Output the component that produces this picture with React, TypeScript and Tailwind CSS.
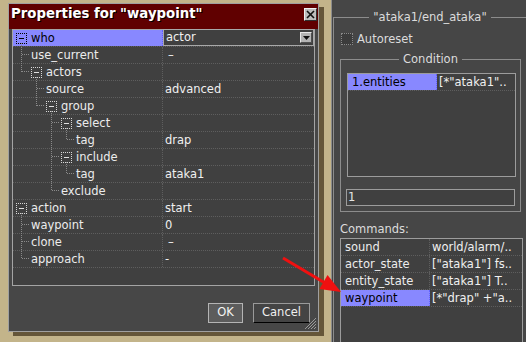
import React from 'react';

type TreeNode = {
  label: string;
  depth: number;
  box?: boolean;
  value?: string;
  dash?: boolean;
};

const tree: TreeNode[] = [
  { label: 'who', depth: 0, box: true, value: 'actor' },
  { label: 'use_current', depth: 1, value: '–', dash: true },
  { label: 'actors', depth: 1, box: true },
  { label: 'source', depth: 2, value: 'advanced' },
  { label: 'group', depth: 2, box: true },
  { label: 'select', depth: 3, box: true },
  { label: 'tag', depth: 4, value: 'drap' },
  { label: 'include', depth: 3, box: true },
  { label: 'tag', depth: 4, value: 'ataka1' },
  { label: 'exclude', depth: 3 },
  { label: 'action', depth: 0, box: true, value: 'start' },
  { label: 'waypoint', depth: 1, value: '0' },
  { label: 'clone', depth: 1, value: '–', dash: true },
  { label: 'approach', depth: 1, value: '-' },
];

const indent = ['pl-[3px]', 'pl-[18px]', 'pl-[33px]', 'pl-[48px]', 'pl-[63px]'];

const ROW = 17;

// dotted connector lines of the tree, worked out from the rows
const TreeLines = () => {
  const lines: React.ReactNode[] = [];
  tree.forEach((node, i) => {
    if (!node.box) return;
    const kids: number[] = [];
    for (let j = i + 1; j < tree.length && tree[j].depth > node.depth; j++) {
      if (tree[j].depth === node.depth + 1) kids.push(j);
    }
    if (!kids.length) return;
    const x = 3 + 15 * node.depth + 5.5;
    const last = kids[kids.length - 1];
    lines.push(
      <line key={`v${i}`} x1={x} y1={ROW * i + 13} x2={x} y2={ROW * last + 8} />,
    );
    kids.forEach((c) => {
      const y = ROW * c + 7.5;
      lines.push(
        <line key={`h${c}`} x1={x} y1={y} x2={3 + 15 * (node.depth + 1) - 1} y2={y} />,
      );
    });
  });
  return (
    <svg
      className="pointer-events-none absolute left-0 top-0"
      width={150}
      height={ROW * tree.length}
      stroke="#8a8a8a"
      strokeDasharray="1 1"
      shapeRendering="crispEdges"
    >
      {lines}
    </svg>
  );
};

const MinusBox = ({ dark }: { dark?: boolean }) => (
  <span
    className={`mr-[4px] flex h-[11px] w-[11px] shrink-0 items-center justify-center border border-dotted ${
      dark ? 'border-black' : 'border-[#d8d8d8]'
    }`}
  >
    <span className={`h-[1px] w-[5px] ${dark ? 'bg-black' : 'bg-[#e0e0e0]'}`} />
  </span>
);

const DropButton = () => (
  <span className="mr-[1px] flex h-[11px] w-[12px] items-center justify-center border border-t-[#e8e8e8] border-l-[#e8e8e8] border-b-[#505050] border-r-[#505050] bg-[#b4b4b4]">
    <svg width="7" height="4" viewBox="0 0 7 4">
      <polygon points="0,0 7,0 3.5,4" fill="#111" />
    </svg>
  </span>
);

const PropertyTree = () => (
  <div className="relative h-[257px] w-[303px] border border-[#a4a4a4] bg-[#404040]">
    <TreeLines />
    {tree.map((node, i) => {
      const selected = i === 0;
      return (
        <div key={i} className="flex h-[17px] border-b border-dotted border-[#5e5e5e] leading-[15px]">
          <div
            className={`flex w-[150px] items-center border-r border-dotted ${indent[node.depth]} ${
              selected ? 'border-[#6060ff] bg-[#8888ff] text-black' : 'border-[#5e5e5e] text-[#ececec]'
            }`}
          >
            {node.box && <MinusBox dark={selected} />}
            <span>{node.label}</span>
          </div>
          {selected ? (
            <div className="-mt-[1px] flex h-[17px] flex-1 items-center justify-between border border-[#a8a8a8] pl-[2px] text-[#f0f0f0]">
              <span>{node.value}</span>
              <DropButton />
            </div>
          ) : (
            <div className={`flex flex-1 items-center text-[#f0f0f0] ${node.dash ? 'pl-[5px]' : 'pl-[2px]'}`}>
              {node.value}
            </div>
          )}
        </div>
      );
    })}
  </div>
);

const ListRow = ({
  label,
  value,
  selected,
}: {
  label: string;
  value: string;
  selected?: boolean;
}) => (
  <div className="flex h-[17px] border-b border-dotted border-[#5e5e5e] leading-[15px]">
    <div
      className={`flex w-[89px] items-center border-r border-dotted pl-[4px] ${
        selected ? 'border-[#6060ff] bg-[#8888ff] text-black' : 'border-[#5e5e5e] text-[#ececec]'
      }`}
    >
      {label}
    </div>
    <div className="flex flex-1 items-center overflow-hidden whitespace-nowrap pl-[2px] text-[#f0f0f0]">
      {value}
    </div>
  </div>
);

const Dialog = () => (
  <div className="relative ml-[8px] mt-[3px] flex h-[329px] w-[311px] shrink-0 flex-col border border-[#a0a0a0] bg-[#474747] shadow-[5px_4px_0_rgba(70,55,30,0.75)]">
    <div className="flex h-[25px] items-start justify-between bg-[#600000] pl-[2px] pr-[1px]">
      <span className="pt-[2px] font-['DejaVu_Sans'] text-[13.3px] font-bold leading-[16px] text-white [text-shadow:1px_1px_0_#000]">
        Properties for "waypoint"
      </span>
      <span className="mt-[4px] flex h-[13px] w-[13px] items-center justify-center border border-t-[#f0f0f0] border-l-[#f0f0f0] border-b-[#303030] border-r-[#303030] bg-[#bdbdbd]">
        <svg width="9" height="9" viewBox="0 0 9 9" stroke="#111" strokeWidth="1.6">
          <line x1="1" y1="1" x2="8" y2="8" />
          <line x1="8" y1="1" x2="1" y2="8" />
        </svg>
      </span>
    </div>
    <div className="px-[3px]">
      <PropertyTree />
    </div>
    <div className="mt-[17px] flex justify-end gap-[10px] pr-[8px]">
      <button className="flex h-[20px] w-[35px] items-center justify-center border border-[#b4b4b4] bg-[#5c5c5c] text-[#f4f4f4]">
        OK
      </button>
      <button className="flex h-[20px] w-[57px] items-center justify-center border border-[#9a9a9a] border-b-black border-b-dotted bg-[#444444] text-[#f0f0f0]">
        Cancel
      </button>
    </div>
    <svg className="absolute bottom-[1px] right-[1px]" width="13" height="13" stroke="#9a9a9a" shapeRendering="crispEdges">
      <line x1="12" y1="1" x2="1" y2="12" />
      <line x1="12" y1="4" x2="4" y2="12" />
      <line x1="12" y1="7" x2="7" y2="12" />
      <line x1="12" y1="10" x2="10" y2="12" />
    </svg>
  </div>
);

const SidePanel = () => (
  <div className="ml-[12px] h-[342px] w-[195px] shrink-0 border-l border-[#8c8c8c] bg-[#464646] text-[#dcdcdc]">
    <fieldset className="ml-[1px] mt-[10px] h-[340px] w-[194px] border border-[#8c8c8c]">
      <legend className="mx-auto px-[4px] leading-[14px]">"ataka1/end_ataka"</legend>
      <div className="ml-[7px] mt-[8px] flex items-center gap-[4px]">
        <span className="h-[12px] w-[12px] border border-dotted border-[#8a8a8a] bg-[#3c3c3c]" />
        <span className="leading-[14px]">Autoreset</span>
      </div>
      <fieldset className="ml-[6px] mt-[6px] w-[181px] border border-[#8c8c8c] pb-[5px]">
        <legend className="mx-auto px-[4px] leading-[14px]">Condition</legend>
        <div className="ml-[6px] mt-[7px] h-[104px] w-[169px] border border-[#9c9c9c] bg-[#404040]">
          <ListRow label="1.entities" value={'[*"ataka1"..'} selected />
        </div>
        <div className="ml-[5px] mt-[12px] flex h-[17px] w-[169px] items-center border border-[#9c9c9c] bg-[#404040] pl-[1px] leading-[15px] text-[#e4e4e4]">
          1
        </div>
      </fieldset>
      <div className="ml-[6px] mt-[10px] leading-[14px]">Commands:</div>
      <div className="ml-[6px] mt-[2px] h-[120px] w-[183px] border border-[#9c9c9c] bg-[#404040]">
        <ListRow label="sound" value="world/alarm/.." />
        <ListRow label="actor_state" value={'["ataka1"] fs..'} />
        <ListRow label="entity_state" value={'["ataka1"] T..'} />
        <ListRow label="waypoint" value={'[*"drap" +"a..'} selected />
      </div>
    </fieldset>
  </div>
);

export default function App() {
  return (
    <div className="relative flex h-[342px] w-[526px] overflow-hidden bg-[#c3b48a] font-['DejaVu_Sans',sans-serif] text-[11.5px]">
      <Dialog />
      <SidePanel />
      {/* red pointer arrow laid over the window */}
      <svg className="pointer-events-none absolute left-0 top-0" width="526" height="342">
        <line x1="283" y1="258" x2="325" y2="283" stroke="#f01010" strokeWidth="3" />
        <polygon points="341,292 319.5,289 327.5,275" fill="#f01010" />
      </svg>
    </div>
  );
}
